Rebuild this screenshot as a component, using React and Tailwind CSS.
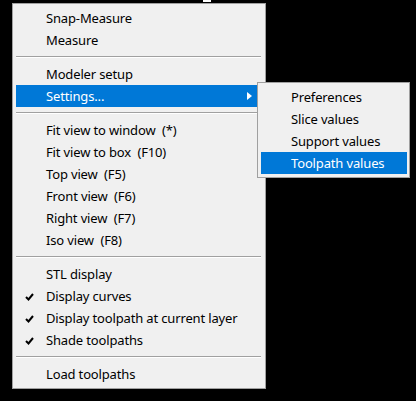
import React from "react";

const font = { fontFamily: '"Noto Sans", "Open Sans", sans-serif' };

const Check = () => (
    <svg width="9" height="8" viewBox="0 0 9 8" className="absolute left-[9px] top-[8px]">
        <path d="M1 4 L3.5 6.5 L8 1" fill="none" stroke="#000" strokeWidth="2" />
    </svg>
);

const Item = ({ label, active, checked, arrow }) => (
    <div
        className={
            "relative flex items-center h-[22px] pl-[30px] pr-[10px] text-[13px] tracking-[-0.15px] whitespace-pre " +
            (active ? "bg-[#0078d7] text-white" : "text-black")
        }
    >
        {checked && <Check />}
        <span className="flex-1 leading-none">{label}</span>
        {arrow && (
            <svg width="5" height="8" viewBox="0 0 5 8" className="mr-[1px]">
                <path d="M0 0 L5 4 L0 8 Z" fill="#fff" />
            </svg>
        )}
    </div>
);

const Sep = () => (
    <div className="h-[12px] flex flex-col justify-center">
        <div className="h-px bg-[#a0a0a0] mr-[2px]" />
        <div className="h-px bg-white mr-[2px]" />
    </div>
);

export default function App() {
    return (
        <div className="relative w-[416px] h-[401px] bg-black overflow-hidden" style={font}>
            <div className="absolute left-[203px] top-0 w-[8px] h-[2px] bg-white" />

            <div className="ml-[12px] pt-[3px] w-[254px]">
                <div className="bg-[#f0f0f0] border border-[#a0a0a0] pl-[3px] pr-[2px] py-[3px]">
                    <Item label="Snap-Measure" />
                    <Item label="Measure" />
                    <Sep />
                    <Item label="Modeler setup" />
                    <Item label="Settings..." active arrow />
                    <Sep />
                    <Item label="Fit view to window  (*)" />
                    <Item label="Fit view to box  (F10)" />
                    <Item label="Top view  (F5)" />
                    <Item label="Front view  (F6)" />
                    <Item label="Right view  (F7)" />
                    <Item label="Iso view  (F8)" />
                    <Sep />
                    <Item label="STL display" />
                    <Item label="Display curves" checked />
                    <Item label="Display toolpath at current layer" checked />
                    <Item label="Shade toolpaths" checked />
                    <Sep />
                    <Item label="Load toolpaths" />
                </div>
            </div>

            <div className="absolute left-[257px] top-[82px] w-[153px] bg-[#f0f0f0] border border-[#a0a0a0] pl-[3px] pr-[2px] py-[3px]">
                <Item label="Preferences" />
                <Item label="Slice values" />
                <Item label="Support values" />
                <Item label="Toolpath values" active />
            </div>
        </div>
    );
}
